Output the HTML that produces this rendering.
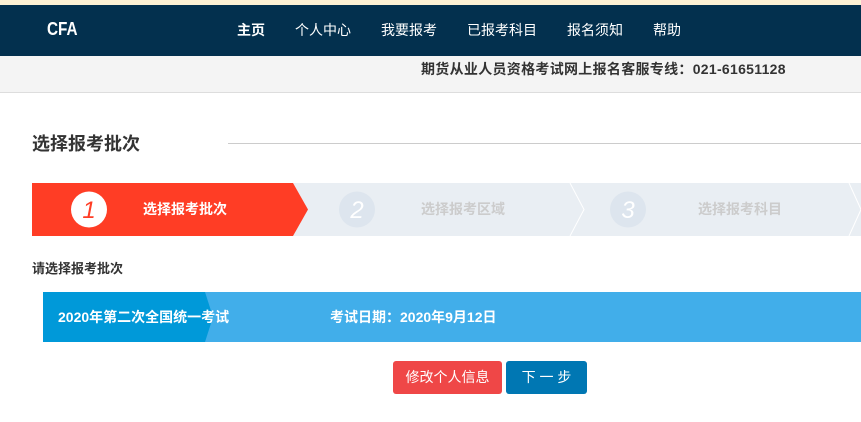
<!DOCTYPE html>
<html><head><meta charset="utf-8"><style>
*{margin:0;padding:0;box-sizing:border-box}
body{width:861px;height:422px;overflow:hidden;background:#fff;font-family:"Liberation Sans","Noto Sans CJK SC",sans-serif;position:relative}
.a{position:absolute}
.b{font-weight:bold}
.n{position:absolute;top:20px;color:#fff;font-size:14px;white-space:nowrap}
</style></head><body>
<div class="a" style="left:0;top:0;width:861px;height:5px;background:#fdf1d4"></div>
<div class="a" style="left:0;top:5px;width:861px;height:51px;background:#03304e"></div>
<div class="a b" style="left:47px;top:19px;color:#fff;font-size:18px;transform:scaleX(0.85);transform-origin:left">CFA</div>
<div class="n b" style="left:237px">主页</div>
<div class="n" style="left:295px">个人中心</div>
<div class="n" style="left:381px">我要报考</div>
<div class="n" style="left:467px">已报考科目</div>
<div class="n" style="left:567px">报名须知</div>
<div class="n" style="left:653px">帮助</div>
<div class="a" style="left:0;top:56px;width:861px;height:37px;background:#f4f4f4;border-bottom:1px solid #ddd"></div>
<div class="a b" style="left:421px;top:59px;color:#333;font-size:14px;white-space:nowrap;letter-spacing:0.3px">期货从业人员资格考试网上报名客服专线：021-61651128</div>
<div class="a b" style="left:32px;top:130px;color:#333;font-size:18px">选择报考批次</div>
<div class="a" style="left:228px;top:143px;width:633px;height:1px;background:#ccc"></div>
<svg class="a" style="left:0;top:183px" width="861" height="53">
<rect x="32" y="0" width="829" height="53" fill="#e9eef3"/>
<polygon points="32,0 293,0 308,26.5 293,53 32,53" fill="#ff3d25"/>
<polyline points="570,0 584,26.5 570,53" fill="none" stroke="#fff" stroke-width="1"/>
<polyline points="849,0 861,26.5 849,53" fill="none" stroke="#fff" stroke-width="1"/>
<ellipse cx="89" cy="26.5" rx="18" ry="18" fill="#fff"/>
<ellipse cx="357" cy="26.5" rx="18" ry="18" fill="#dde5ee"/>
<ellipse cx="628" cy="26.5" rx="18" ry="18" fill="#dde5ee"/>
<text x="89" y="35" text-anchor="middle" font-size="24" font-style="italic" fill="#ff3d25" font-family="Liberation Sans">1</text>
<text x="357" y="35" text-anchor="middle" font-size="24" font-style="italic" fill="#fff" font-family="Liberation Sans">2</text>
<text x="628" y="35" text-anchor="middle" font-size="24" font-style="italic" fill="#fff" font-family="Liberation Sans">3</text>
<text x="143" y="31" font-size="14" font-weight="bold" fill="#fff" font-family="Liberation Sans,Noto Sans CJK SC,sans-serif">选择报考批次</text>
<text x="421" y="31" font-size="14" font-weight="bold" fill="#ccc" font-family="Liberation Sans,Noto Sans CJK SC,sans-serif">选择报考区域</text>
<text x="698" y="31" font-size="14" font-weight="bold" fill="#ccc" font-family="Liberation Sans,Noto Sans CJK SC,sans-serif">选择报考科目</text>
</svg>
<div class="a b" style="left:32px;top:258px;color:#333;font-size:13px">请选择报考批次</div>
<svg class="a" style="left:43px;top:292px" width="818" height="50">
<rect x="0" y="0" width="818" height="50" fill="#41aeea"/>
<polygon points="0,0 162,0 170,25 162,50 0,50" fill="#0099d9"/>
</svg>
<div class="a b" style="left:58px;top:307px;color:#fff;font-size:14px;white-space:nowrap">2020年第二次全国统一考试</div>
<div class="a b" style="left:330px;top:307px;color:#fff;font-size:14px;white-space:nowrap">考试日期：2020年9月12日</div>
<div class="a" style="left:393px;top:361px;width:109px;height:33px;background:#ef4747;border-radius:3px;color:#fff;font-size:14px;text-align:center;line-height:33px">修改个人信息</div>
<div class="a" style="left:506px;top:361px;width:81px;height:33px;background:#0077b3;border-radius:3px;color:#fff;font-size:14px;text-align:center;line-height:33px">下 一 步</div>
</body></html>
